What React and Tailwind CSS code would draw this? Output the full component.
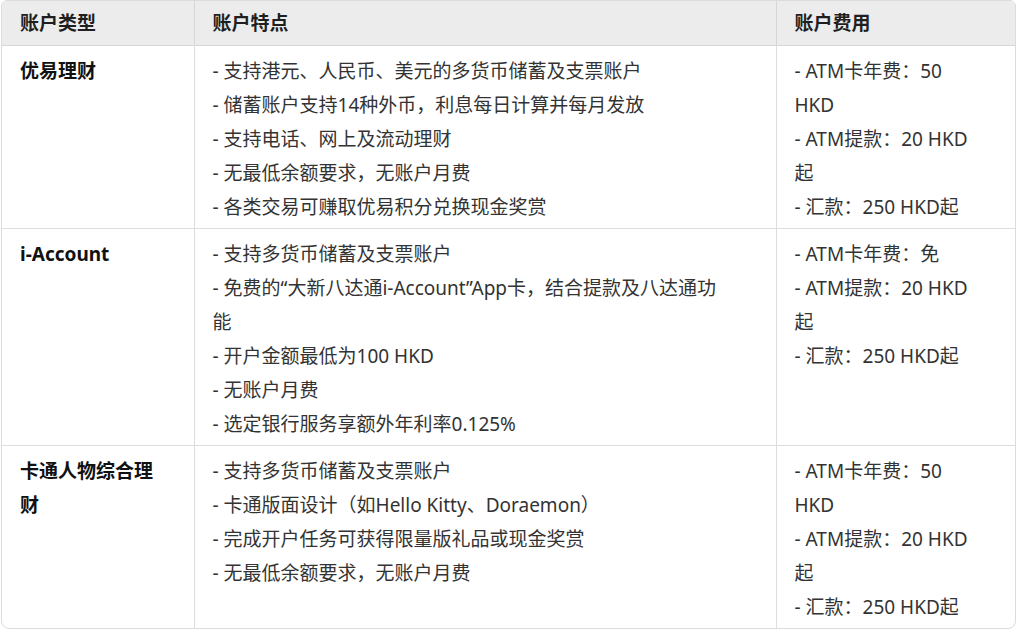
const rows = [
  {
    name: "优易理财",
    features: [
      "- 支持港元、人民币、美元的多货币储蓄及支票账户",
      "- 储蓄账户支持14种外币，利息每日计算并每月发放",
      "- 支持电话、网上及流动理财",
      "- 无最低余额要求，无账户月费",
      "- 各类交易可赚取优易积分兑换现金奖赏",
    ],
    fees: ["- ATM卡年费：50", "HKD", "- ATM提款：20 HKD", "起", "- 汇款：250 HKD起"],
  },
  {
    name: "i-Account",
    features: [
      "- 支持多货币储蓄及支票账户",
      "- 免费的“大新八达通i-Account”App卡，结合提款及八达通功",
      "能",
      "- 开户金额最低为100 HKD",
      "- 无账户月费",
      "- 选定银行服务享额外年利率0.125%",
    ],
    fees: ["- ATM卡年费：免", "- ATM提款：20 HKD", "起", "- 汇款：250 HKD起"],
  },
  {
    name: "卡通人物综合理",
    name2: "财",
    features: [
      "- 支持多货币储蓄及支票账户",
      "- 卡通版面设计（如Hello Kitty、Doraemon）",
      "- 完成开户任务可获得限量版礼品或现金奖赏",
      "- 无最低余额要求，无账户月费",
    ],
    fees: ["- ATM卡年费：50", "HKD", "- ATM提款：20 HKD", "起", "- 汇款：250 HKD起"],
  },
];

function Lines({ items }) {
  return items.map((t, i) => (
    <div key={i} className="whitespace-nowrap">
      {t}
    </div>
  ));
}

export default function App() {
  return (
    <div
      className="min-h-[633px] bg-white pl-px text-[19px] leading-[34px] text-[#333]"
      style={{ fontFamily: '"Noto Sans", "Noto Sans CJK SC", sans-serif' }}
    >
      <div className="w-[1015px] overflow-hidden rounded-b-lg rounded-t-md border border-[#dcdcdc]">
        <table className="w-full table-fixed border-collapse">
          <colgroup>
            <col className="w-[192px]" />
            <col className="w-[582px]" />
            <col />
          </colgroup>
          <thead>
            <tr className="bg-[#ececec] text-left text-[#1f1f1f]">
              <th className="h-[44px] border-b border-[#d6d6d6] px-[18px] py-0 font-bold leading-[28px]">账户类型</th>
              <th className="border-b border-l border-[#d6d6d6] px-[18px] py-0 font-bold leading-[28px]">账户特点</th>
              <th className="border-b border-l border-[#d6d6d6] px-[18px] py-0 font-bold leading-[28px]">账户费用</th>
            </tr>
          </thead>
          <tbody>
            {rows.map((r, i) => (
              <tr key={i} className={i < rows.length - 1 ? "border-b border-[#dedede]" : ""}>
                <td className="px-[18px] pt-[8px] pb-[4px] align-top font-bold text-[#111]">
                  <div>{r.name}</div>
                  {r.name2 && <div>{r.name2}</div>}
                </td>
                <td className="border-l border-[#dedede] px-[18px] pt-[8px] pb-[4px] align-top">
                  <Lines items={r.features} />
                </td>
                <td className="border-l border-[#dedede] px-[18px] pt-[8px] pb-[4px] align-top">
                  <Lines items={r.fees} />
                </td>
              </tr>
            ))}
          </tbody>
        </table>
      </div>
    </div>
  );
}
